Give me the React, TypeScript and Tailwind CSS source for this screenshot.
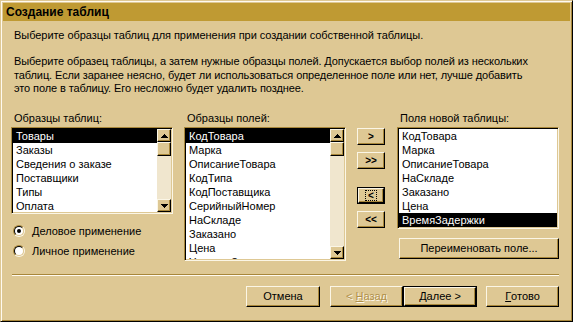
import React from "react";

const raised =
  "border border-t-[#fbf6e6] border-l-[#fbf6e6] border-r-black border-b-black shadow-[inset_-1px_-1px_0_#a8873a] bg-[#dec894]";
const sunken =
  "border border-t-[#a8873a] border-l-[#a8873a] border-r-[#fbf6e6] border-b-[#fbf6e6] shadow-[inset_1px_1px_0_#000,inset_-1px_-1px_0_#dec894]";

function Tri({ up }: { up: boolean }) {
  return (
    <svg width="7" height="4" viewBox="0 0 7 4" shapeRendering="crispEdges">
      {up ? (
        <polygon points="3.5,0 7,4 0,4" fill="#000" />
      ) : (
        <polygon points="0,0 7,0 3.5,4" fill="#000" />
      )}
    </svg>
  );
}

function ScrollBar() {
  return (
    <div className="w-[14px] flex flex-col bg-[#f0e6ce] shrink-0">
      <div className={`${raised} h-[13px] flex items-center justify-center`}>
        <Tri up />
      </div>
      <div className={`${raised} h-[14px]`} />
      <div className="flex-1" />
      <div className={`${raised} h-[13px] flex items-center justify-center`}>
        <Tri up={false} />
      </div>
    </div>
  );
}

function ListBox({
  items,
  selected,
  className,
  scroll,
}: {
  items: string[];
  selected: number;
  className: string;
  scroll: boolean;
}) {
  return (
    <div className={`${sunken} bg-white p-[1px] flex overflow-hidden ${className}`}>
      <div className="flex-1 flex flex-col overflow-hidden">
        {items.map((it, i) => (
          <div
            key={i}
            className={`h-[14px] shrink-0 leading-[14px] pl-[3px] whitespace-nowrap ${
              i === selected ? "bg-black text-white" : "text-black"
            }`}
          >
            {it}
          </div>
        ))}
      </div>
      {scroll && <ScrollBar />}
    </div>
  );
}

function Radio({ checked, label }: { checked: boolean; label: string }) {
  return (
    <div className="flex items-center h-[20px] ml-[2px]">
      <div className="w-[12px] h-[12px] rounded-full border border-t-[#a8873a] border-l-[#a8873a] border-r-[#fbf6e6] border-b-[#fbf6e6] flex">
        <div className="flex-1 rounded-full border border-t-black border-l-black border-r-[#dec894] border-b-[#dec894] bg-white flex items-center justify-center">
          {checked && <div className="w-[4px] h-[4px] rounded-full bg-black" />}
        </div>
      </div>
      <span className="ml-[7px]">{label}</span>
    </div>
  );
}

function SmallBtn({ label, focused }: { label: string; focused?: boolean }) {
  if (focused) {
    return (
      <div className="w-[28px] h-[17px] border border-black flex">
        <div className={`${raised} flex-1 flex items-center justify-center`}>
          <div className="border border-dotted border-black px-[2px] h-[11px] flex items-center font-bold leading-none text-[10px]">
            {label}
          </div>
        </div>
      </div>
    );
  }
  return (
    <div
      className={`${raised} w-[28px] h-[17px] flex items-center justify-center font-bold text-[10px] leading-none`}
    >
      {label}
    </div>
  );
}

export default function App() {
  return (
    <div className="w-[573px] h-[322px] overflow-hidden bg-[#dec894] border border-t-[#dec894] border-l-[#dec894] border-r-black border-b-black shadow-[inset_1px_1px_0_#fffaf0,inset_-1px_-1px_0_#a8873a] p-[2px] font-['Liberation_Sans',Arial,sans-serif] text-[11px] text-black">
      <div className="h-[18px] bg-[#bf9a33] pl-[3px] flex items-center font-bold text-[12px]">
        Создание таблиц
      </div>
      <div className="pl-[8px] pr-[11px] flex flex-col">
        <p className="mt-[7px] ml-[3px] leading-[14px] tracking-[-0.05px]">
          Выберите образцы таблиц для применения при создании собственной таблицы.
        </p>
        <p className="mt-[13px] ml-[3px] leading-[13.5px] w-[545px] tracking-[-0.1px]">
          Выберите образец таблицы, а затем нужные образцы полей. Допускается выбор полей из нескольких
          <br />
          таблиц. Если заранее неясно, будет ли использоваться определенное поле или нет, лучше добавить
          <br />
          это поле в таблицу. Его несложно будет удалить позднее.
        </p>
        <div className="mt-[15.5px] flex">
          <div className="w-[162px] flex flex-col">
            <div className="h-[16px] leading-[14px] pl-[3px]">Образцы таблиц:</div>
            <ListBox
              className="h-[87px]"
              scroll
              selected={0}
              items={["Товары", "Заказы", "Сведения о заказе", "Поставщики", "Типы", "Оплата"]}
            />
            <div className="mt-[7px] flex flex-col">
              <Radio checked label="Деловое применение" />
              <Radio checked={false} label="Личное применение" />
            </div>
          </div>
          <div className="w-[162px] ml-[11px] flex flex-col">
            <div className="h-[16px] leading-[14px] pl-[3px]">Образцы полей:</div>
            <ListBox
              className="h-[134px]"
              scroll
              selected={0}
              items={[
                "КодТовара",
                "Марка",
                "ОписаниеТовара",
                "КодТипа",
                "КодПоставщика",
                "СерийныйНомер",
                "НаСкладе",
                "Заказано",
                "Цена",
                "УровеньЗаказа",
              ]}
            />
          </div>
          <div className="w-[28px] ml-[11px] pt-[17px] flex flex-col">
            <SmallBtn label=">" />
            <div className="mt-[7px]">
              <SmallBtn label=">>" />
            </div>
            <div className="mt-[18px]">
              <SmallBtn label="<" focused />
            </div>
            <div className="mt-[7px]">
              <SmallBtn label="<<" />
            </div>
          </div>
          <div className="w-[162px] ml-[12px] flex flex-col">
            <div className="h-[16px] leading-[14px] pl-[3px]">Поля новой таблицы:</div>
            <ListBox
              className="h-[102px]"
              scroll={false}
              selected={6}
              items={[
                "КодТовара",
                "Марка",
                "ОписаниеТовара",
                "НаСкладе",
                "Заказано",
                "Цена",
                "ВремяЗадержки",
              ]}
            />
            <div
              className={`${raised} mt-[9px] ml-[2px] h-[21px] flex items-center justify-center`}
            >
              Переименовать поле...
            </div>
          </div>
        </div>
        <div className="mt-[13px] ml-[1px] h-[2px] border-t border-t-[#a8873a] border-b border-b-[#fffaf0]" />
        <div className="mt-[10px] flex justify-end">
          <div className={`${raised} w-[74px] h-[21px] flex items-center justify-center`}>Отмена</div>
          <div
            className={`${raised} ml-[10px] w-[73px] h-[21px] flex items-center justify-center text-[#b0914a] [text-shadow:1px_1px_0_#fffaf0]`}
          >
            &lt; <span className="underline ml-[3px]">Н</span>азад
          </div>
          <div className="w-[74px] h-[21px] border border-black flex">
            <div className={`${raised} flex-1 flex items-center justify-center`}>
              <span className="underline">Д</span>алее &gt;
            </div>
          </div>
          <div className={`${raised} ml-[9px] w-[73px] h-[21px] flex items-center justify-center`}>
            <span className="underline">Г</span>отово
          </div>
        </div>
      </div>
    </div>
  );
}
